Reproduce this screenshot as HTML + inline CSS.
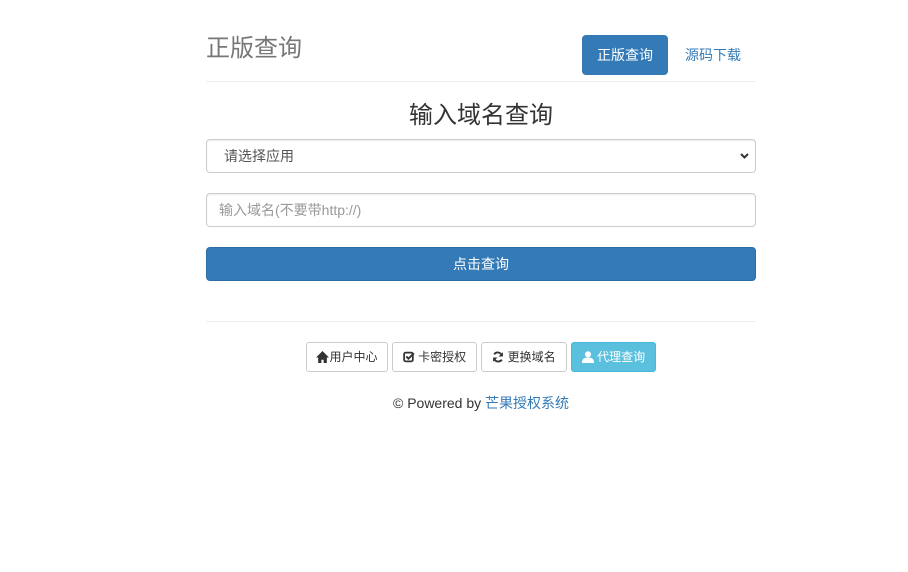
<!DOCTYPE html>
<html><head><meta charset="utf-8"><style>
*{box-sizing:border-box}
body{margin:0;width:908px;height:572px;background:#fff;font-family:"Liberation Sans","Noto Sans CJK SC",sans-serif;color:#333;font-size:14px}
.h3{position:absolute;left:206px;top:33px;font-size:24px;color:#777;line-height:32px}
.nav1{position:absolute;left:582px;top:35px;width:86px;height:40px;background:#337ab7;color:#fff;border-radius:4px;text-align:center;line-height:40px;font-size:14px}
.nav2{position:absolute;left:685px;top:35px;line-height:40px;color:#337ab7}
.hr{position:absolute;left:206px;width:550px;height:1px;background:#eee}
.title{position:absolute;left:206px;width:550px;top:100px;text-align:center;font-size:24px;line-height:32px;color:#333}
.ctl{position:absolute;left:206px;width:550px;height:34px;border:1px solid #ccc;border-radius:4px;padding:0 12px;line-height:32px;font-size:14px;box-shadow:inset 0 1px 1px rgba(0,0,0,.075)}
.btn{position:absolute;top:342px;height:30px;border:1px solid #ccc;border-radius:3px;font-size:12px;line-height:28px;text-align:center;color:#333;background:#fff}
svg{vertical-align:-2px}
</style></head><body>
<div class="h3">正版查询</div>
<div class="nav1">正版查询</div>
<div class="nav2">源码下载</div>
<div class="hr" style="top:81px"></div>
<div class="title">输入域名查询</div>
<div class="ctl" style="top:139px;color:#555;padding-left:17px">请选择应用<svg style="position:absolute;right:6px;top:12px" width="9" height="8" viewBox="0 0 9 8"><path d="M1 2l3.5 3.5L8 2" stroke="#333" stroke-width="2" fill="none"/></svg></div>
<div class="ctl" style="top:193px;color:#999">输入域名(不要带http://)</div>
<div class="ctl" style="top:247px;background:#337ab7;border-color:#2e6da4;color:#fff;text-align:center;box-shadow:none">点击查询</div>
<div class="hr" style="top:321px"></div>
<div class="btn" style="left:306px;width:82px"><svg width="13" height="12" viewBox="0 0 12 11"><path d="M6 0L0 6h2v5h3V8h2v3h3V6h2z" fill="#333"/></svg>用户中心</div>
<div class="btn" style="left:392px;width:85px"><svg width="12" height="12" viewBox="0 0 11 11"><rect x="1" y="1.5" width="8" height="8" rx="1.5" stroke="#333" stroke-width="1.6" fill="none"/><path d="M3 5l2 2 5-5" stroke="#333" stroke-width="1.8" fill="none"/></svg> 卡密授权</div>
<div class="btn" style="left:481px;width:86px"><svg width="12" height="12" viewBox="0 0 11 11"><path d="M9 4A4 4 0 0 0 2 3M2 7a4 4 0 0 0 7 1" stroke="#333" stroke-width="1.7" fill="none"/><path d="M10 1v4H6zM1 10V6h4z" fill="#333"/></svg> 更换域名</div>
<div class="btn" style="left:571px;width:85px;background:#5bc0de;border-color:#46b8da;color:#fff"><svg width="12" height="12" viewBox="0 0 11 11"><circle cx="5.5" cy="3" r="2.8" fill="#fff"/><path d="M0 11c0-4 2-5 5.5-5S11 7 11 11z" fill="#fff"/></svg> 代理查询</div>
<div style="position:absolute;left:206px;width:550px;top:393px;text-align:center;font-size:14px;line-height:20px">© Powered by <span style="color:#337ab7">芒果授权系统</span></div>
</body></html>
